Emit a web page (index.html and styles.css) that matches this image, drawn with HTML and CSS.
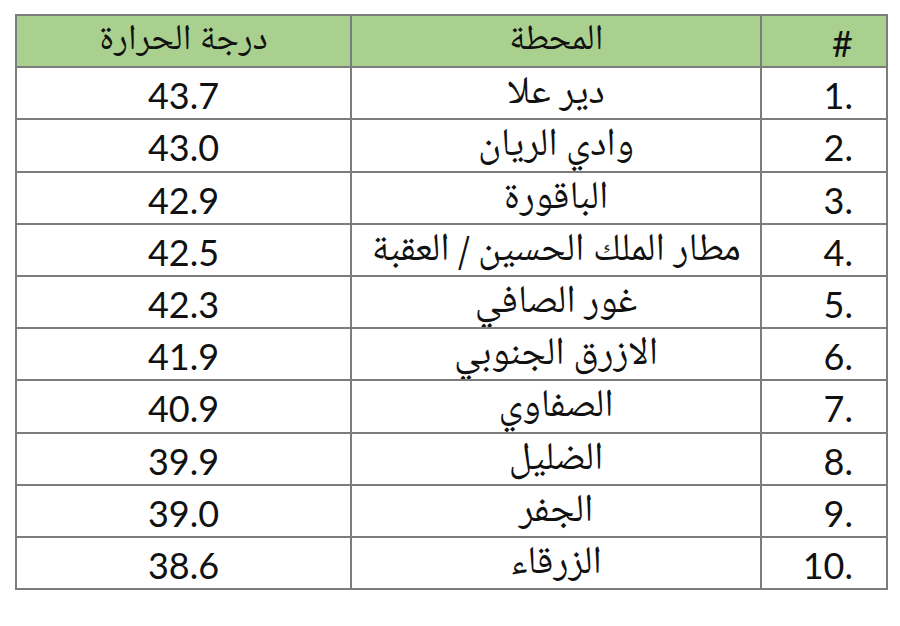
FILE: index.html
```html
<!DOCTYPE html>
<html lang="ar">
<head>
<meta charset="utf-8">
<link rel="stylesheet" href="styles.css">
</head>
<body>
<table class="tbl" dir="rtl">
  <colgroup>
    <col class="c-num">
    <col class="c-st">
    <col class="c-t">
  </colgroup>
  <thead>
    <tr><th class="num">#</th><th class="ar-h">المحطة</th><th class="ar-h">درجة الحرارة</th></tr>
  </thead>
  <tbody>
    <tr><td class="num" dir="ltr">1.</td><td class="ar">دير علا</td><td class="t">43.7</td></tr>
    <tr><td class="num" dir="ltr">2.</td><td class="ar">وادي الريان</td><td class="t">43.0</td></tr>
    <tr><td class="num" dir="ltr">3.</td><td class="ar">الباقورة</td><td class="t">42.9</td></tr>
    <tr><td class="num" dir="ltr">4.</td><td class="ar">مطار الملك الحسين / العقبة</td><td class="t">42.5</td></tr>
    <tr><td class="num" dir="ltr">5.</td><td class="ar">غور الصافي</td><td class="t">42.3</td></tr>
    <tr><td class="num" dir="ltr">6.</td><td class="ar">الازرق الجنوبي</td><td class="t">41.9</td></tr>
    <tr><td class="num" dir="ltr">7.</td><td class="ar">الصفاوي</td><td class="t">40.9</td></tr>
    <tr><td class="num" dir="ltr">8.</td><td class="ar">الضليل</td><td class="t">39.9</td></tr>
    <tr><td class="num" dir="ltr">9.</td><td class="ar">الجفر</td><td class="t">39.0</td></tr>
    <tr><td class="num" dir="ltr">10.</td><td class="ar">الزرقاء</td><td class="t">38.6</td></tr>
  </tbody>
</table>
</body>
</html>
```

FILE: styles.css
```css
html, body {
  margin: 0;
  padding: 0;
  background: #ffffff;
}
body {
  padding: 14px 0 0 15px;
  font-family: "Lato", "Noto Naskh Arabic", sans-serif;
  color: #111111;
}
.tbl {
  border-collapse: collapse;
  table-layout: fixed;
  width: 871px;
}
.c-num { width: 126px; }
.c-st { width: 410px; }
.c-t { width: 335px; }
.tbl th, .tbl td {
  border: 2px solid #7c7c7c;
  height: 50.2px;
  padding: 0;
  text-align: center;
  vertical-align: middle;
  font-size: 36px;
  font-weight: normal;
  line-height: 40px;
  overflow: hidden;
}
.tbl th {
  background: #a9d08e;
}
.tbl .ar {
  font-family: "Noto Naskh Arabic UI", "Noto Naskh Arabic", serif;
  font-size: 39px;
}
.tbl .ar-h {
  font-family: "Noto Naskh Arabic UI", "Noto Naskh Arabic", serif;
  font-size: 36px;
}
.tbl .num {
  font-family: "Lato", sans-serif;
  text-align: right;
  padding-right: 33px;
  height: 46.2px;
  padding-top: 4px;
}
.tbl .t {
  font-family: "Lato", sans-serif;
  height: 46.2px;
  padding-top: 4px;
}
```
